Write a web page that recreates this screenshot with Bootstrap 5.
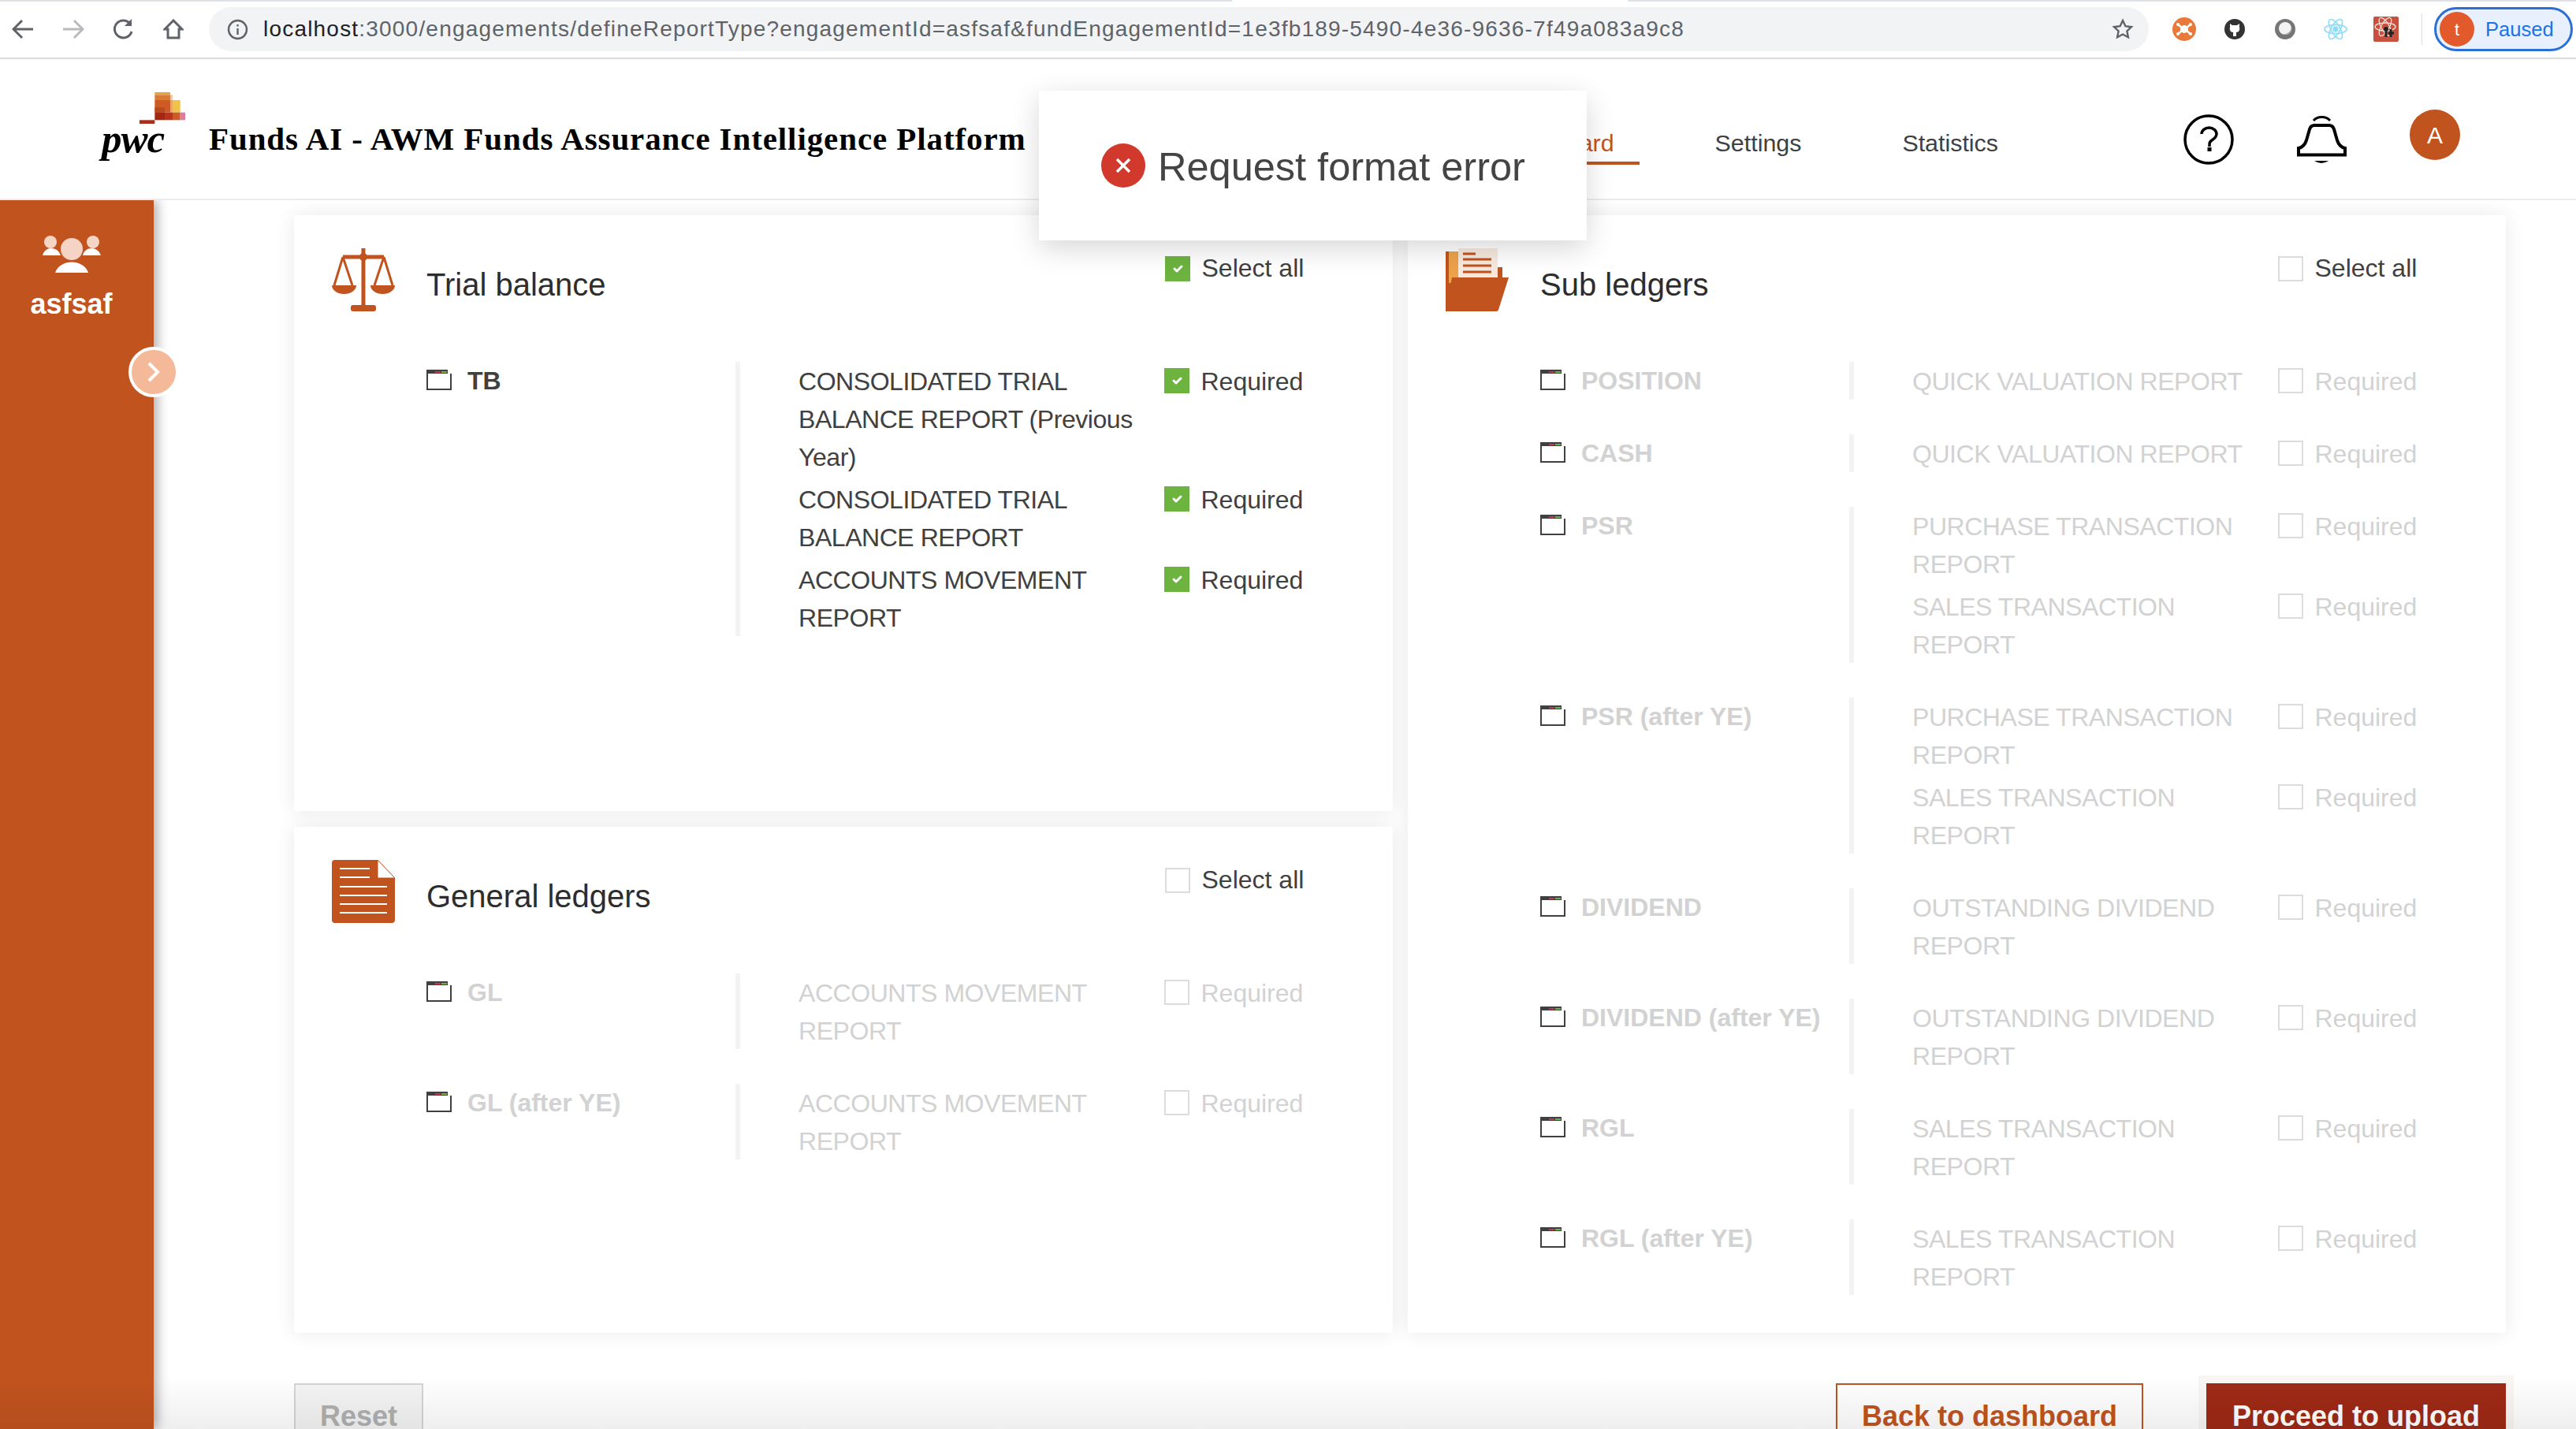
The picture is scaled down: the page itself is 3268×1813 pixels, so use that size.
<!DOCTYPE html>
<html lang="en">
<head>
<meta charset="utf-8">
<title>Funds AI</title>
<link href="https://cdn.jsdelivr.net/npm/bootstrap@5.3.0/dist/css/bootstrap.min.css" rel="stylesheet">
<style>
html,body{height:100%;overflow:hidden;background:#fff;font-family:"Liberation Sans",Arial,sans-serif;}
.tabline{height:2px;background:#dee1e6;}
.tabline-gap{width:502px;margin-left:1563px;height:2px;background:#fff;}
.chrome-bar{height:73px;border-bottom:2px solid #dadce0;padding:7px 4px 0 0;background:#fff;flex:none;}
.cb-nav{width:265px;padding-left:15px;gap:36px;height:56px;}
.url-pill{width:2461px;height:56px;background:#f1f3f4;border-radius:28px;padding:0 19px 0 23px;}
.url-text{margin-left:19px;font-size:28px;letter-spacing:1.2px;color:#5f6368;white-space:nowrap;line-height:56px;font-family:"Liberation Sans",sans-serif;}
.url-text b{font-weight:400;color:#202124;}
.ext-row{height:56px;margin-left:13px;}
.ext-cell{width:64px;height:60px;}
.ext-sep{width:1px;height:40px;background:#dadce0;margin-left:13px;}
.paused-chip{width:176px;height:56px;margin-left:15px;border:3px solid #2a6fd6;border-radius:28px;background:#e8f0fe;color:#1a73e8;font-size:25.6px;gap:14px;padding-left:4px;}
.paused-avatar{width:44px;height:44px;border-radius:50%;background:#e25a2b;color:#fff;font-size:22px;}
.app-head{height:179px;border-bottom:2px solid #ececec;flex:none;padding-left:129px;padding-right:147px;background:#fff;}
.logo-box{width:106px;margin-right:30px;padding-top:42px;}
.logo-box svg{display:block;margin-left:48px;}
.pwc-word{font-family:"Liberation Serif",serif;font-weight:700;font-style:italic;font-size:51px;line-height:38px;color:#000;letter-spacing:-1px;}
.app-title{font-family:"Liberation Serif",serif;font-weight:700;font-size:41px;line-height:50px;color:#000;padding-top:76px;letter-spacing:.9px;white-space:nowrap;}
.top-nav{margin-top:82px;margin-right:203px;gap:64px;}
.top-nav .nav-link{padding:0 32px;line-height:48px;font-size:30.4px;color:#404040;border-bottom:4px solid transparent;}
.top-nav .nav-link.active{color:#c1531f;border-bottom-color:#c1531f;}
.head-ico{margin-top:70px;}
.head-bell{margin-left:80px;margin-top:71px;}
.head-avatar{width:64px;height:64px;background:#c1531f;color:#fff;border-radius:50%;font-size:30px;margin-left:79px;margin-top:64px;}
.side-rail{width:195px;background:#c1531f;box-shadow:4px 0 14px rgba(0,0,0,.35);flex:none;color:#fff;padding:44px 14px 0 0;z-index:2;}
.side-name{font-weight:700;font-size:36px;line-height:44px;margin-top:16px;}
.rail-toggle{left:163px;top:186px;width:64px;height:64px;border-radius:50%;background:#f4b999;border:4px solid #fff;}
.work-area{padding:19px 89px 0 178px;overflow:hidden;}
.sheet-grid{display:grid;grid-template-columns:1394px 1fr;gap:19px;}
.sheet{background:#fff;box-shadow:0 0 24px rgba(0,0,0,.09);}
.sheet-tb{height:756px;}
.sheet-gl{height:642px;}
.sheet-col{gap:20px;}
.sheet-sub{height:1418px;}
.sheet-top{height:186px;padding:42px 0 0 48px;}
.sheet-title{margin:16px 0 0 40px;font-size:40px;line-height:60px;color:#2d2d2d;font-weight:400;}
.all-box{width:289px;margin-top:10px;font-size:32px;line-height:30px;color:#404040;gap:14.5px;}
.grp{margin:0 0 44px 168px;}
.grp-name{width:392px;font-weight:700;font-size:32px;line-height:48px;color:#404040;gap:20px;}
.grp-name svg{margin-top:10px;flex:none;}
.grp-list{border-left:6px solid #f3f3f3;padding-left:74px;}
.rep{font-size:32px;line-height:48px;color:#404040;margin-bottom:5px;padding-top:1px;}
.rep:last-child{margin-bottom:-1px;}
.rep-text{width:464px;padding-right:24px;letter-spacing:-.45px;}
.rep-req{gap:14.5px;}
.tick.form-check-input{width:32px;height:32px;border-radius:0;border:2px solid #dcdcdc;margin:0;flex:none;background-size:70%;background-color:#fff;opacity:1;}
.tick.form-check-input:checked{background-color:#6cb33f;border-color:#6cb33f;opacity:1;}
.rep-req .tick{margin-top:7px;}
.off .grp-name,.off .rep{color:#d2d2d2;}
.foot-row{margin-top:64px;}
.act{font-weight:700;font-size:36px;line-height:48px;padding:16px 30px;border-radius:0;height:82px;}
.act-reset,.act-reset:disabled{background:#f4f4f4;border:2px solid #d4d4d4;color:#b0b0b0;opacity:1;width:164px;}
.act-back{background:#fff;border:2px solid #c1531f;color:#c1531f;width:390px;}
.act-go{background:#9e2915;border:2px solid #9e2915;color:#fff;width:380px;box-shadow:0 0 0 10px #f9f6f3;}
.foot-gap{gap:80px;}
.bottom-fade{left:0;right:0;bottom:0;height:68px;background:linear-gradient(to bottom,rgba(0,0,0,0),rgba(0,0,0,.065));pointer-events:none;z-index:3;}
.err-toast{left:1318px;top:115px;width:695px;height:190px;background:#fff;box-shadow:0 10px 34px rgba(0,0,0,.16);padding:2px 0 0 79px;gap:16px;font-size:50.5px;color:#444;z-index:5;white-space:nowrap;}
.err-toast svg{margin-top:-2px;}
.err-toast span{padding-top:2px;}
</style>
</head>
<body class="position-relative">
<svg width="0" height="0" class="position-absolute">
<symbol id="f-ico" viewBox="0 0 32 26">
<rect x="1" y="1" width="30" height="24" fill="#fff" stroke="#404040" stroke-width="2"/>
<rect x="0" y="0" width="32" height="5" fill="#404040"/>
<rect x="11" y="2" width="7" height="2" fill="#c0394b"/>
<rect x="19" y="2" width="7" height="2" fill="#72b043"/>
<rect x="27" y="0" width="5" height="5" fill="#fff"/>
<path d="M31 5V25" stroke="#404040" stroke-width="2"/>
</symbol>
</svg>
<div class="d-flex flex-column vh-100">
  <div class="tabline flex-none"><div class="tabline-gap"></div></div>
  <div class="chrome-bar d-flex">
    <div class="cb-nav d-flex align-items-center">
      <svg width="28" height="26" viewBox="0 0 28 26" fill="none" stroke="#5f6368" stroke-width="3"><path d="M27 13H3M13 2 2 13l11 11"/></svg>
      <svg width="28" height="26" viewBox="0 0 28 26" fill="none" stroke="#b8babd" stroke-width="3"><path d="M1 13h24M15 2l11 11-11 11"/></svg>
      <svg width="28" height="28" viewBox="0 0 28 28" fill="none" stroke="#5f6368" stroke-width="3"><path d="M24 17a11 11 0 1 1-2-10"/><path d="M24 1v9h-9" fill="#5f6368" stroke="none"/></svg>
      <svg width="26" height="26" viewBox="0 0 26 26" fill="none" stroke="#5f6368" stroke-width="3"><path d="M13 2 2 13h4v11h14V13h4z"/></svg>
    </div>
    <div class="url-pill d-flex align-items-center">
      <svg width="27" height="27" viewBox="0 0 27 27" fill="none" stroke="#5f6368" stroke-width="2.4" class="flex-none"><circle cx="13.5" cy="13.5" r="11.5"/><path d="M13.5 12v8M13.5 7v2.6"/></svg>
      <span class="url-text"><b>localhost</b>:3000/engagements/defineReportType?engagementId=asfsaf&amp;fundEngagementId=1e3fb189-5490-4e36-9636-7f49a083a9c8</span>
      <svg width="28" height="28" viewBox="0 0 28 28" fill="none" stroke="#5f6368" stroke-width="2.4" class="ms-auto flex-none"><path d="m14 3 3.4 7.2 7.6 1-5.6 5.300 1.500 7.800L14 20.500l-6.900 3.800 1.500-7.800L3 11.200l7.600-1z"/></svg>
    </div>
    <div class="ext-row d-flex align-items-center">
      <div class="ext-cell d-flex align-items-center justify-content-center">
        <svg width="30" height="30" viewBox="0 0 30 30"><circle cx="15" cy="15" r="15" fill="#e8793a"/><circle cx="15" cy="15" r="5" fill="#fff"/><path d="M7 9l5 4M23 9l-5 4M7 21l5-4M23 21l-5-4" stroke="#fff" stroke-width="2.500"/><circle cx="7" cy="9" r="2" fill="#fff"/><circle cx="23" cy="9" r="2" fill="#fff"/><circle cx="7" cy="21" r="2" fill="#fff"/><circle cx="23" cy="21" r="2" fill="#fff"/></svg>
      </div>
      <div class="ext-cell d-flex align-items-center justify-content-center">
        <svg width="26" height="26" viewBox="0 0 26 26"><circle cx="13" cy="13" r="13" fill="#333"/><path d="M7 6l3 2h6l3-2v5c1 3-1 6-4 6v5h-4v-5c-3 0-5-3-4-6z" fill="#fff"/></svg>
      </div>
      <div class="ext-cell d-flex align-items-center justify-content-center">
        <svg width="30" height="30" viewBox="0 0 30 30"><circle cx="15" cy="15" r="13" fill="#757575"/><circle cx="15" cy="14" r="8" fill="#f2f2f2"/><path d="M23 12a8 8 0 0 1-11 9.500A10 10 0 0 0 23 12z" fill="#aaa"/></svg>
      </div>
      <div class="ext-cell d-flex align-items-center justify-content-center">
        <svg width="32" height="30" viewBox="0 0 32 32" fill="none" stroke="#8fdcf5" stroke-width="1.8"><circle cx="16" cy="16" r="3" fill="#8fdcf5"/><ellipse cx="16" cy="16" rx="15" ry="6"/><ellipse cx="16" cy="16" rx="15" ry="6" transform="rotate(60 16 16)"/><ellipse cx="16" cy="16" rx="15" ry="6" transform="rotate(120 16 16)"/></svg>
      </div>
      <div class="ext-cell d-flex align-items-center justify-content-center">
        <svg width="32" height="32" viewBox="0 0 32 32"><rect width="32" height="32" rx="2" fill="#c8503e"/><g fill="none" stroke="#f6e2dc" stroke-width="1.300"><ellipse cx="15" cy="13" rx="13" ry="5"/><ellipse cx="15" cy="13" rx="13" ry="5" transform="rotate(60 15 13)"/><ellipse cx="15" cy="13" rx="13" ry="5" transform="rotate(120 15 13)"/></g><circle cx="16" cy="16" r="3" fill="#222"/><path d="M16 19v7M22 16v10M19 21h7" stroke="#222" stroke-width="3"/></svg>
      </div>
      <div class="ext-sep"></div>
      <div class="paused-chip d-flex align-items-center"><span class="paused-avatar d-flex align-items-center justify-content-center flex-none">t</span><span>Paused</span></div>
    </div>
  </div>

  <header class="app-head d-flex align-items-start">
    <div class="logo-box flex-none">
      <svg width="58" height="40" viewBox="231 80 174 120">
        <rect x="289" y="80" width="59" height="10" fill="#e8a33d"/>
        <rect x="289" y="90" width="59" height="20" fill="#da7a34"/>
        <rect x="348" y="90" width="9" height="20" fill="#f2c79c"/>
        <rect x="348" y="110" width="9" height="47" fill="#eda566"/>
        <rect x="289" y="110" width="59" height="47" fill="#cf5a23"/>
        <rect x="289" y="138" width="38" height="19" fill="#b84a1f"/>
        <rect x="357" y="110" width="29" height="47" fill="#f0c24a"/>
        <rect x="289" y="157" width="38" height="29" fill="#a32712"/>
        <rect x="327" y="157" width="30" height="29" fill="#b8341a"/>
        <rect x="357" y="157" width="29" height="29" fill="#cd5a28"/>
        <rect x="386" y="157" width="19" height="29" fill="#e27aa0"/>
        <rect x="231" y="186" width="58" height="14" fill="#a8301a"/>
      </svg>
      <div class="pwc-word">pwc</div>
    </div>
    <div class="app-title">Funds AI - AWM Funds Assurance Intelligence Platform</div>
    <ul class="nav top-nav ms-auto">
      <li class="nav-item"><a class="nav-link active" href="#">Dashboard</a></li>
      <li class="nav-item"><a class="nav-link" href="#">Settings</a></li>
      <li class="nav-item"><a class="nav-link" href="#">Statistics</a></li>
    </ul>
    <svg class="head-ico flex-none" width="64" height="64" viewBox="0 0 64 64" fill="none" stroke="#000" stroke-width="3.5"><circle cx="32" cy="32" r="30"/><path d="M23 25a9.500 8 0 0 1 19 0c0 4-3 6-6 8-2 1.300-3 3-3 5v3" stroke-width="3.500"/><rect x="30.500" y="42" width="5" height="5" fill="#000" stroke="none"/></svg>
    <svg class="head-bell flex-none" width="64" height="62" viewBox="0 0 64 62" fill="none" stroke="#000" stroke-width="4"><path d="M21 7c5-6 16-6 21 0" stroke-width="3"/><path d="M2 50.500V42c5-1 8-4 10-10l4-14c1-3 3-5 6-5h19c3 0 5 2 6 5l4 14c2 6 5 9 10 10v8.500z"/><path d="M22 58h18q-9 6-18 0z" fill="#000" stroke="none"/></svg>
    <div class="head-avatar d-flex align-items-center justify-content-center flex-none">A</div>
  </header>

  <div class="d-flex flex-grow-1 overflow-hidden position-relative">
    <aside class="side-rail position-relative text-center">
      <svg width="74" height="50" viewBox="0 0 74 50" class="d-block mx-auto">
        <circle cx="10" cy="9" r="8" fill="#f5d4c6"/><circle cx="64" cy="9" r="8" fill="#f5d4c6"/>
        <path d="M0 26c3-12 19-12 23 0zM51 26c3-12 19-12 23 0z" fill="#fff"/>
        <circle cx="37" cy="18" r="14" fill="#f5d4c6"/>
        <path d="M16 48c6-18 36-18 42 0z" fill="#fff"/>
      </svg>
      <div class="side-name">asfsaf</div>
      <div class="rail-toggle position-absolute d-flex align-items-center justify-content-center">
        <svg width="18" height="26" viewBox="0 0 18 26" fill="none" stroke="#fff" stroke-width="4"><path d="m3 2 11 11L3 24"/></svg>
      </div>
    </aside>

    <main class="work-area flex-grow-1">
      <div class="sheet-grid">
        <div class="d-flex flex-column sheet-col">
          <section class="sheet sheet-tb">
            <div class="sheet-top d-flex align-items-start">
              <svg width="80" height="80" viewBox="0 0 80 80" class="flex-none" fill="none" stroke="#c1531f" stroke-width="3">
                <path d="M40 0v76" stroke-width="5"/><circle cx="40" cy="11" r="5" fill="#c1531f" stroke="none"/>
                <path d="M14 11h52" stroke-width="5"/><path d="M14 11 3 47M14 11l12 36M66 11 54 47M66 11l11 36"/>
                <path d="M0 47h31a15.500 11 0 0 1-31 0zM49 47h31a15.500 11 0 0 1-31 0z" fill="#c1531f" stroke="none"/>
                <rect x="24" y="72" width="32" height="8" rx="3" fill="#c1531f" stroke="none"/>
              </svg>
              <h2 class="sheet-title flex-grow-1">Trial balance</h2>
              <label class="all-box d-flex align-items-start flex-none"><input class="form-check-input tick" type="checkbox" checked>Select all</label>
            </div>
            <div class="grp d-flex">
              <div class="grp-name d-flex"><svg width="32" height="26"><use href="#f-ico"/></svg>TB</div>
              <div class="grp-list">
                <div class="rep d-flex"><div class="rep-text">CONSOLIDATED TRIAL BALANCE REPORT (Previous Year)</div><label class="rep-req d-flex"><input class="form-check-input tick" type="checkbox" checked>Required</label></div>
                <div class="rep d-flex"><div class="rep-text">CONSOLIDATED TRIAL BALANCE REPORT</div><label class="rep-req d-flex"><input class="form-check-input tick" type="checkbox" checked>Required</label></div>
                <div class="rep d-flex"><div class="rep-text">ACCOUNTS MOVEMENT REPORT</div><label class="rep-req d-flex"><input class="form-check-input tick" type="checkbox" checked>Required</label></div>
              </div>
            </div>
          </section>
          <section class="sheet sheet-gl">
            <div class="sheet-top d-flex align-items-start">
              <svg width="80" height="80" viewBox="0 0 80 80" class="flex-none">
                <path d="M4 0h54l22 23v53a4 4 0 0 1-4 4H4a4 4 0 0 1-4-4V4a4 4 0 0 1 4-4z" fill="#c1531f"/>
                <path d="M58 0v23h22z" fill="#fff" stroke="#c1531f"/>
                <path d="M10 11h38M10 22h38M10 34h60M10 45h60M10 56h60M10 67h60" stroke="#fff" stroke-width="2"/>
              </svg>
              <h2 class="sheet-title flex-grow-1">General ledgers</h2>
              <label class="all-box d-flex align-items-start flex-none"><input class="form-check-input tick" type="checkbox">Select all</label>
            </div>
            <div class="off">
              <div class="grp d-flex">
                <div class="grp-name d-flex"><svg width="32" height="26"><use href="#f-ico"/></svg>GL</div>
                <div class="grp-list"><div class="rep d-flex"><div class="rep-text">ACCOUNTS MOVEMENT REPORT</div><label class="rep-req d-flex"><input class="form-check-input tick" type="checkbox">Required</label></div></div>
              </div>
              <div class="grp d-flex">
                <div class="grp-name d-flex"><svg width="32" height="26"><use href="#f-ico"/></svg>GL (after YE)</div>
                <div class="grp-list"><div class="rep d-flex"><div class="rep-text">ACCOUNTS MOVEMENT REPORT</div><label class="rep-req d-flex"><input class="form-check-input tick" type="checkbox">Required</label></div></div>
              </div>
            </div>
          </section>
        </div>
        <section class="sheet sheet-sub">
          <div class="sheet-top d-flex align-items-start">
            <svg width="80" height="80" viewBox="0 0 80 80" class="flex-none">
              <rect x="0" y="4" width="14" height="76" fill="#c1531f"/><rect x="4" y="4" width="12" height="40" fill="#eda24a"/>
              <rect x="66" y="24" width="6" height="20" fill="#c1531f"/>
              <rect x="16" y="0" width="50" height="44" fill="#f7e9dc"/>
              <path d="M22 7h16M22 14h36M22 22h36M22 30h36" stroke="#c1531f" stroke-width="3"/>
              <path d="M8 37h72l-13 41a3 3 0 0 1-3 2H0z" fill="#c1531f"/>
            </svg>
            <h2 class="sheet-title flex-grow-1">Sub ledgers</h2>
            <label class="all-box d-flex align-items-start flex-none"><input class="form-check-input tick" type="checkbox">Select all</label>
          </div>
          <div class="off">
            <div class="grp d-flex">
              <div class="grp-name d-flex"><svg width="32" height="26"><use href="#f-ico"/></svg>POSITION</div>
              <div class="grp-list"><div class="rep d-flex"><div class="rep-text">QUICK VALUATION REPORT</div><label class="rep-req d-flex"><input class="form-check-input tick" type="checkbox">Required</label></div></div>
            </div>
            <div class="grp d-flex">
              <div class="grp-name d-flex"><svg width="32" height="26"><use href="#f-ico"/></svg>CASH</div>
              <div class="grp-list"><div class="rep d-flex"><div class="rep-text">QUICK VALUATION REPORT</div><label class="rep-req d-flex"><input class="form-check-input tick" type="checkbox">Required</label></div></div>
            </div>
            <div class="grp d-flex">
              <div class="grp-name d-flex"><svg width="32" height="26"><use href="#f-ico"/></svg>PSR</div>
              <div class="grp-list">
                <div class="rep d-flex"><div class="rep-text">PURCHASE TRANSACTION REPORT</div><label class="rep-req d-flex"><input class="form-check-input tick" type="checkbox">Required</label></div>
                <div class="rep d-flex"><div class="rep-text">SALES TRANSACTION REPORT</div><label class="rep-req d-flex"><input class="form-check-input tick" type="checkbox">Required</label></div>
              </div>
            </div>
            <div class="grp d-flex">
              <div class="grp-name d-flex"><svg width="32" height="26"><use href="#f-ico"/></svg>PSR (after YE)</div>
              <div class="grp-list">
                <div class="rep d-flex"><div class="rep-text">PURCHASE TRANSACTION REPORT</div><label class="rep-req d-flex"><input class="form-check-input tick" type="checkbox">Required</label></div>
                <div class="rep d-flex"><div class="rep-text">SALES TRANSACTION REPORT</div><label class="rep-req d-flex"><input class="form-check-input tick" type="checkbox">Required</label></div>
              </div>
            </div>
            <div class="grp d-flex">
              <div class="grp-name d-flex"><svg width="32" height="26"><use href="#f-ico"/></svg>DIVIDEND</div>
              <div class="grp-list"><div class="rep d-flex"><div class="rep-text">OUTSTANDING DIVIDEND REPORT</div><label class="rep-req d-flex"><input class="form-check-input tick" type="checkbox">Required</label></div></div>
            </div>
            <div class="grp d-flex">
              <div class="grp-name d-flex"><svg width="32" height="26"><use href="#f-ico"/></svg>DIVIDEND (after YE)</div>
              <div class="grp-list"><div class="rep d-flex"><div class="rep-text">OUTSTANDING DIVIDEND REPORT</div><label class="rep-req d-flex"><input class="form-check-input tick" type="checkbox">Required</label></div></div>
            </div>
            <div class="grp d-flex">
              <div class="grp-name d-flex"><svg width="32" height="26"><use href="#f-ico"/></svg>RGL</div>
              <div class="grp-list"><div class="rep d-flex"><div class="rep-text">SALES TRANSACTION REPORT</div><label class="rep-req d-flex"><input class="form-check-input tick" type="checkbox">Required</label></div></div>
            </div>
            <div class="grp d-flex">
              <div class="grp-name d-flex"><svg width="32" height="26"><use href="#f-ico"/></svg>RGL (after YE)</div>
              <div class="grp-list"><div class="rep d-flex"><div class="rep-text">SALES TRANSACTION REPORT</div><label class="rep-req d-flex"><input class="form-check-input tick" type="checkbox">Required</label></div></div>
            </div>
          </div>
        </section>
      </div>
      <div class="foot-row d-flex justify-content-between align-items-start">
        <button class="btn act act-reset" disabled>Reset</button>
        <div class="d-flex foot-gap">
          <button class="btn act act-back">Back to dashboard</button>
          <button class="btn act act-go">Proceed to upload</button>
        </div>
      </div>
    </main>
  </div>
</div>
<div class="bottom-fade position-absolute"></div>
<div class="err-toast position-absolute d-flex align-items-center">
  <svg width="56" height="56" viewBox="0 0 56 56" class="flex-none"><circle cx="28" cy="28" r="28" fill="#d0392b"/><path d="M20 20l16 16M36 20 20 36" stroke="#fff" stroke-width="3.500"/></svg>
  <span>Request format error</span>
</div>
<script src="https://cdn.jsdelivr.net/npm/bootstrap@5.3.0/dist/js/bootstrap.bundle.min.js"></script>
</body>
</html>
